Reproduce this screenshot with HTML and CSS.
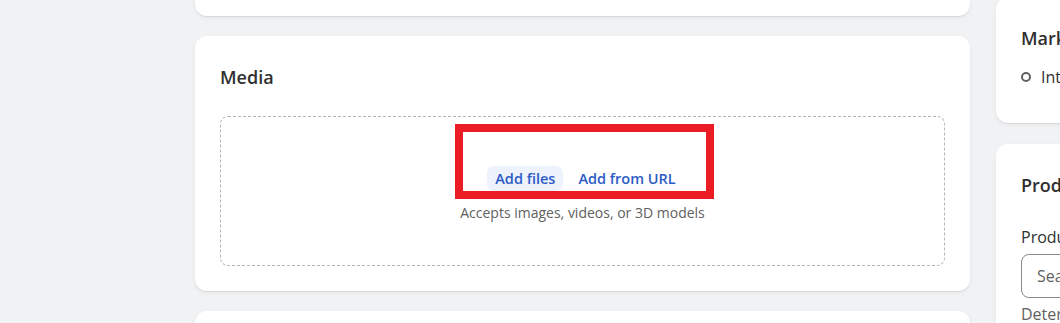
FILE: index.html
```html
<!DOCTYPE html>
<html lang="en">
<head>
    <meta charset="UTF-8">
    <meta name="viewport" content="width=device-width, initial-scale=1.0">
    <title>Add product - Media</title>
    <link rel="stylesheet" href="styles.css">
</head>
<body>
    <div class="page">
        <div class="main">
            <div class="card card-clipped"></div>

            <div class="card">
                <h2>Media</h2>
                <div class="dropzone">
                    <div class="dropzone-actions">
                        <button class="btn btn-tinted">Add files</button>
                        <button class="btn btn-plain">Add from URL</button>
                    </div>
                    <p class="hint">Accepts images, videos, or 3D models</p>
                    <div class="highlight"></div>
                </div>
            </div>

            <div class="card card-next"></div>
        </div>

        <div class="side">
            <div class="card card-markets">
                <h2>Markets</h2>
                <ul class="markets">
                    <li>International</li>
                </ul>
            </div>

            <div class="card">
                <h2>Product organization</h2>
                <label class="field-label" for="type">Product type</label>
                <input class="field" id="type" type="text" placeholder="Search">
                <p class="help">Determines US tax rates</p>
            </div>
        </div>
    </div>
</body>
</html>
```

FILE: styles.css
```css
body {
    font-family: "Open Sans", "Noto Sans", sans-serif;
    background: #f1f2f4;
    color: #303030;
    margin: 0;
    overflow: hidden;
}
.page {
    display: flex;
    align-items: flex-start;
    gap: 26px;
    padding-left: 195px;
    margin-top: -3px;
}
.main {
    width: 775px;
    flex-shrink: 0;
    display: flex;
    flex-direction: column;
    gap: 20px;
}
.side {
    width: 330px;
    flex-shrink: 0;
    display: flex;
    flex-direction: column;
    gap: 21px;
}
.card {
    background: #fff;
    border-radius: 12px;
    padding: 29px 25px 25px;
    box-shadow: 0 1px 1px rgba(0, 0, 0, 0.07), 0 2px 5px rgba(0, 0, 0, 0.05);
}
.card-clipped {
    height: 19px;
    padding: 0;
    border-radius: 0 0 12px 12px;
}
.card-next { height: 60px; }
h2 {
    font-size: 18px;
    line-height: 24px;
    font-weight: 600;
    margin: 0;
    white-space: nowrap;
}
.dropzone {
    position: relative;
    margin-top: 27px;
    height: 148px;
    border: 1px dashed #b5b5b5;
    border-radius: 8px;
    display: flex;
    flex-direction: column;
    align-items: center;
    justify-content: center;
}
.dropzone-actions {
    display: flex;
    gap: 7px;
    margin-top: 6px;
    margin-left: 6px;
}
.btn {
    font-family: inherit;
    font-size: 14.5px;
    font-weight: 600;
    color: #2c5cc5;
    border: none;
    border-radius: 7px;
    padding: 0 8px;
    height: 25px;
    cursor: pointer;
    background: transparent;
}
.btn-tinted { background: #edf2fc; }
.hint {
    margin: 12px 0 0;
    font-size: 14px;
    line-height: 20px;
    color: #616161;
}
.highlight {
    position: absolute;
    left: 234px;
    top: 7px;
    width: 243px;
    height: 59px;
    border: 8px solid #ec1c24;
}
.card-markets { padding-bottom: 34px; }
.markets {
    list-style: none;
    margin: 15px 0 0;
    padding: 0;
}
.markets li {
    font-size: 16px;
    line-height: 24px;
    white-space: nowrap;
    display: flex;
    align-items: center;
    gap: 10px;
}
.markets li::before {
    content: "";
    width: 6px;
    height: 6px;
    border: 2px solid #616161;
    border-radius: 50%;
}
.field-label {
    display: block;
    margin-top: 28px;
    font-size: 16px;
    line-height: 24px;
    white-space: nowrap;
}
.field {
    display: block;
    box-sizing: border-box;
    width: 100%;
    height: 44px;
    margin-top: 5px;
    padding: 0 15px;
    font-family: inherit;
    font-size: 16px;
    border: 1px solid #8a8a8a;
    border-radius: 8px;
}
.field::placeholder { color: #616161; }
.help {
    margin: 5px 0 0;
    font-size: 16px;
    color: #616161;
    white-space: nowrap;
}
```
